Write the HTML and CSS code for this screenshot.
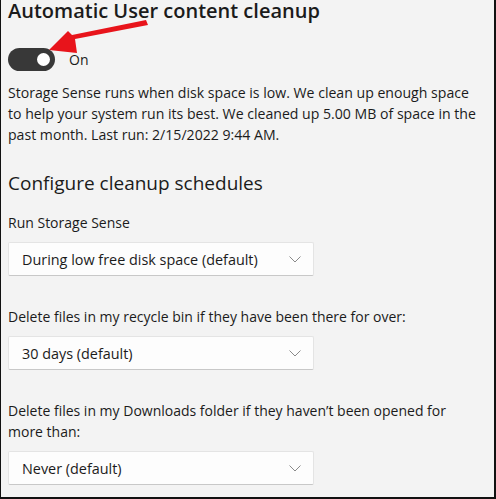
FILE: index.html
```html
<!DOCTYPE html>
<html>
<head>
<meta charset="utf-8">
<link rel="stylesheet" href="styles.css">
</head>
<body>
<div class="frame">
  <h1 class="title">Automatic User content cleanup</h1>
  <div class="toggle-row">
    <span class="toggle"><span class="knob"></span></span>
    <span class="toggle-label">On</span>
  </div>
  <p class="desc">Storage Sense runs when disk space is low. We clean up enough space<br>to help your system run its best. We cleaned up 5.00 MB of space in the<br>past month. Last run: 2/15/2022 9:44 AM.</p>
  <h2 class="subtitle">Configure cleanup schedules</h2>

  <div class="field">
    <div class="label">Run Storage Sense</div>
    <div class="select"><span>During low free disk space (default)</span><svg class="chev" viewBox="0 0 12 7" width="12" height="7"><path d="M0.5 0.5 L6 6 L11.5 0.5" fill="none" stroke="#8a8a8a" stroke-width="1"/></svg></div>
  </div>

  <div class="field">
    <div class="label">Delete files in my recycle bin if they have been there for over:</div>
    <div class="select"><span>30 days (default)</span><svg class="chev" viewBox="0 0 12 7" width="12" height="7"><path d="M0.5 0.5 L6 6 L11.5 0.5" fill="none" stroke="#8a8a8a" stroke-width="1"/></svg></div>
  </div>

  <div class="field">
    <div class="label">Delete files in my Downloads folder if they haven’t been opened for<br>more than:</div>
    <div class="select"><span>Never (default)</span><svg class="chev" viewBox="0 0 12 7" width="12" height="7"><path d="M0.5 0.5 L6 6 L11.5 0.5" fill="none" stroke="#8a8a8a" stroke-width="1"/></svg></div>
  </div>

  <svg class="arrow" width="160" height="60" viewBox="0 0 160 60">
    <path d="M147 25 L74 39 L76 53 L48 50 L67 31 L71 35 L145 20 Z" fill="#e8141b"/>
  </svg>
</div>
</body>
</html>
```
FILE: styles.css
```css
html, body {
  margin: 0;
  padding: 0;
}
body {
  width: 496px;
  height: 499px;
  overflow: hidden;
  background: #f3f3f3;
  font-family: "Open Sans", "Noto Sans", sans-serif;
  color: #1b1b1b;
}
.frame {
  position: relative;
  box-sizing: border-box;
  width: 496px;
  height: 499px;
  border-right: 2px solid #111;
  border-bottom: 2px solid #111;
  border-left: 1px solid #111;
  padding: 0 0 0 7px;
  overflow: hidden;
}
.title {
  margin: 0;
  font-size: 20px;
  font-weight: 600;
  line-height: 22px;
}
.toggle-row {
  display: flex;
  align-items: center;
  margin-top: 26px;
  height: 23px;
}
.toggle {
  position: relative;
  box-sizing: border-box;
  width: 47px;
  height: 23px;
  border-radius: 12px;
  background: #383838;
  display: flex;
  align-items: center;
  justify-content: flex-end;
  padding-right: 5px;
}
.knob {
  width: 13px;
  height: 13px;
  border-radius: 50%;
  background: #fff;
}
.toggle-label {
  margin-left: 14px;
  font-size: 14px;
}
.desc {
  margin: 11px 0 0;
  font-size: 14.1px;
  line-height: 21px;
}
.subtitle {
  margin: 26px 0 0;
  font-size: 19px;
  font-weight: 400;
  line-height: 24px;
}
.subtitle + .field {
  margin-top: 17px;
}
.field + .field {
  margin-top: 30px;
}
.label {
  font-size: 14px;
  line-height: 21px;
}
.select {
  box-sizing: border-box;
  margin-top: 9px;
  width: 306px;
  height: 34px;
  background: #fdfdfd;
  border: 1px solid #e4e4e4;
  border-bottom-color: #c8c8c8;
  border-radius: 2px;
  display: flex;
  align-items: center;
  justify-content: space-between;
  padding: 0 12px 0 13px;
  font-size: 14.4px;
}
.chev {
  display: block;
}
.arrow {
  position: absolute;
  left: 0;
  top: 0;
}
```
